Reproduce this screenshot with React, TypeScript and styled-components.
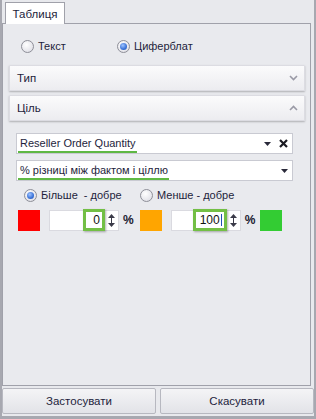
import React from "react";
import styled, { createGlobalStyle, css } from "styled-components";

const Global = createGlobalStyle`
  html, body { margin: 0; padding: 0; }
  body { font-family: "Liberation Sans", Arial, sans-serif; font-size: 11px; color: #1e1e3c; }
`;

const Window = styled.div`
  width: 316px;
  height: 419px;
  box-sizing: border-box;
  background: #e8e9ed;
  border-left: 2px solid #a7a8b0;
  border-right: 2px solid #a7a8b0;
  border-bottom: 3px solid #a7a8b0;
  display: flex;
  flex-direction: column;
`;

const TabStrip = styled.div`
  display: flex;
  padding: 2px 0 0 3px;
  height: 23px;
  box-sizing: border-box;
`;

const Tab = styled.div`
  background: #fff;
  border: 1px solid #a0a1aa;
  border-bottom: none;
  width: 60px;
  justify-content: center;
  height: 22px;
  box-sizing: border-box;
  display: flex;
  align-items: center;
  margin-bottom: -1px;
  position: relative;
  z-index: 1;
  font-size: 11.5px;
`;

const Panel = styled.div`
  flex: 1;
  border: 1px solid #a0a1aa;
  margin-right: 3px;
  background: #e9eaee;
  padding: 13px 5px 0 5px;
  display: flex;
  flex-direction: column;
`;

const RadioRow = styled.div<{ $pl: number }>`
  display: flex;
  align-items: center;
  padding-left: ${(p) => p.$pl}px;
  height: 18px;
`;

const RadioLabel = styled.label<{ $w?: number }>`
  display: flex;
  align-items: center;
  gap: 4px;
  width: ${(p) => (p.$w ? `${p.$w}px` : "auto")};
`;

const RadioCircle = styled.span<{ $on?: boolean }>`
  width: 11px;
  height: 11px;
  border-radius: 50%;
  border: 1px solid #8e8f98;
  background: radial-gradient(circle at 40% 35%, #ffffff 0%, #e4e4ea 70%, #cfd0d8 100%);
  display: flex;
  align-items: center;
  justify-content: center;
  ${(p) =>
    p.$on &&
    css`
      &::after {
        content: "";
        width: 7px;
        height: 7px;
        border-radius: 50%;
        background: radial-gradient(circle at 40% 35%, #9fc4ff 0%, #3a72d8 60%, #2452a8 100%);
      }
    `}
`;

const Accordion = styled.div`
  margin-top: 10px;
  display: flex;
  flex-direction: column;
  gap: 4px;
  padding-left: 1px;
  width: 296px;
`;

const AccHeader = styled.div`
  height: 26px;
  box-sizing: border-box;
  background: linear-gradient(#fbfbfc, #ececf0);
  border: 1px solid #dcdce2;
  box-shadow: 0 1px 2px rgba(0, 0, 0, 0.25);
  border-radius: 1px;
  display: flex;
  align-items: center;
  justify-content: space-between;
  padding: 0 6px 0 7px;
  font-size: 11.5px;
`;

const Chevron = ({ up }: { up?: boolean }) => (
  <svg width="9" height="6" viewBox="0 0 9 6">
    <polyline
      points={up ? "1,5 4.5,1.5 8,5" : "1,1 4.5,4.5 8,1"}
      fill="none"
      stroke="#9a9aa6"
      strokeWidth="1.6"
    />
  </svg>
);

const Section = styled.div`
  padding: 12px 12px 0 8px;
  display: flex;
  flex-direction: column;
  gap: 6px;
`;

const Combo = styled.div`
  height: 21px;
  box-sizing: border-box;
  background: #fff;
  border: 1px solid #c9cad2;
  display: flex;
  align-items: stretch;
  padding: 0 4px 0 1px;
`;

const ComboText = styled.span`
  display: flex;
  align-items: center;
  padding: 0 1px 0 2px;
  border-bottom: 2px solid #5fb844;
  white-space: nowrap;
  font-size: 11px;
`;

const ComboIcons = styled.div`
  margin-left: auto;
  display: flex;
  align-items: center;
  gap: 8px;
`;

const Arrow = () => (
  <svg width="7" height="4" viewBox="0 0 7 4">
    <polygon points="0,0 7,0 3.5,4" fill="#2a2a3a" />
  </svg>
);

const Cross = () => (
  <svg width="9" height="9" viewBox="0 0 9 9">
    <path d="M1 1 L8 8 M8 1 L1 8" stroke="#1a1a22" strokeWidth="2.2" />
  </svg>
);

const OptsRow = styled.div`
  display: flex;
  align-items: center;
  padding-left: 8px;
  height: 16px;
`;

const ColorRow = styled.div`
  display: flex;
  align-items: center;
  height: 22px;
`;

const Swatch = styled.div<{ $c: string; $ml: number }>`
  width: 22px;
  height: 21px;
  background: ${(p) => p.$c};
  margin-left: ${(p) => p.$ml}px;
`;

const Spin = styled.div<{ $ml: number }>`
  margin-left: ${(p) => p.$ml}px;
  width: 70px;
  height: 21px;
  box-sizing: border-box;
  background: #fff;
  border: 1px solid #dadae0;
  display: flex;
  align-items: center;
  justify-content: flex-end;
`;

const Highlight = styled.div<{ $w: number }>`
  width: ${(p) => p.$w}px;
  height: 22px;
  box-sizing: border-box;
  border: 3px solid #73bf45;
  box-shadow: 1px 1px 2px rgba(0, 0, 0, 0.3);
  background: #fff;
  display: flex;
  align-items: center;
  justify-content: flex-end;
  padding-right: 2px;
  font-size: 12px;
  color: #111;
`;

const Caret = styled.span`
  display: inline-block;
  width: 1px;
  height: 12px;
  background: #1e50b4;
  margin-left: 1px;
`;

const SpinArrows = () => (
  <svg width="9" height="17" viewBox="0 0 9 17" style={{ margin: "0 2px 0 2px" }}>
    <polygon points="1,6 4.5,2 8,6" fill="#3a3a48" />
    <rect x="4" y="6" width="1" height="5" fill="#3a3a48" />
    <polygon points="1,11 4.5,15 8,11" fill="#3a3a48" />
  </svg>
);

const Pct = styled.span`
  margin-left: 4px;
  font-weight: bold;
  font-size: 12px;
  color: #202030;
`;

const Spacer = styled.div`
  flex: 1;
`;

const Buttons = styled.div`
  display: flex;
  gap: 4px;
  padding: 2px 0 2px 0;
  height: 30px;
  box-sizing: border-box;
`;

const Button = styled.button`
  flex: 1;
  height: 26px;
  border: 1px solid #b7b8c0;
  border-radius: 2px;
  background: linear-gradient(#f4f4f6, #e2e3e8);
  font-family: "Liberation Sans", Arial, sans-serif;
  font-size: 11.5px;
  color: #1e1e3c;
  padding: 0;
`;

export default function App() {
  return (
    <>
      <Global />
      <Window>
        <TabStrip>
          <Tab>Таблиця</Tab>
        </TabStrip>
        <Panel>
          <RadioRow $pl={13}>
            <RadioLabel $w={96}>
              <RadioCircle />
              Текст
            </RadioLabel>
            <RadioLabel>
              <RadioCircle $on />
              Циферблат
            </RadioLabel>
          </RadioRow>
          <Accordion>
            <AccHeader>
              <span>Тип</span>
              <Chevron />
            </AccHeader>
            <AccHeader>
              <span>Ціль</span>
              <Chevron up />
            </AccHeader>
          </Accordion>
          <Section>
            <Combo>
              <ComboText>Reseller Order Quantity</ComboText>
              <ComboIcons>
                <Arrow />
                <Cross />
              </ComboIcons>
            </Combo>
            <Combo>
              <ComboText>% різниці між фактом і ціллю</ComboText>
              <ComboIcons>
                <Arrow />
              </ComboIcons>
            </Combo>
            <OptsRow>
              <RadioLabel $w={116}>
                <RadioCircle $on />
                Більше &nbsp;- добре
              </RadioLabel>
              <RadioLabel>
                <RadioCircle />
                Менше - добре
              </RadioLabel>
            </OptsRow>
            <ColorRow>
              <Swatch $c="#ff0000" $ml={2} />
              <Spin $ml={9}>
                <Highlight $w={22}>0</Highlight>
                <SpinArrows />
              </Spin>
              <Pct>%</Pct>
              <Swatch $c="#ffa500" $ml={6} />
              <Spin $ml={9}>
                <Highlight $w={34}>
                  100
                  <Caret />
                </Highlight>
                <SpinArrows />
              </Spin>
              <Pct>%</Pct>
              <Swatch $c="#33cc33" $ml={5} />
            </ColorRow>
          </Section>
          <Spacer />
        </Panel>
        <Buttons>
          <Button>Застосувати</Button>
          <Button>Скасувати</Button>
        </Buttons>
      </Window>
    </>
  );
}
